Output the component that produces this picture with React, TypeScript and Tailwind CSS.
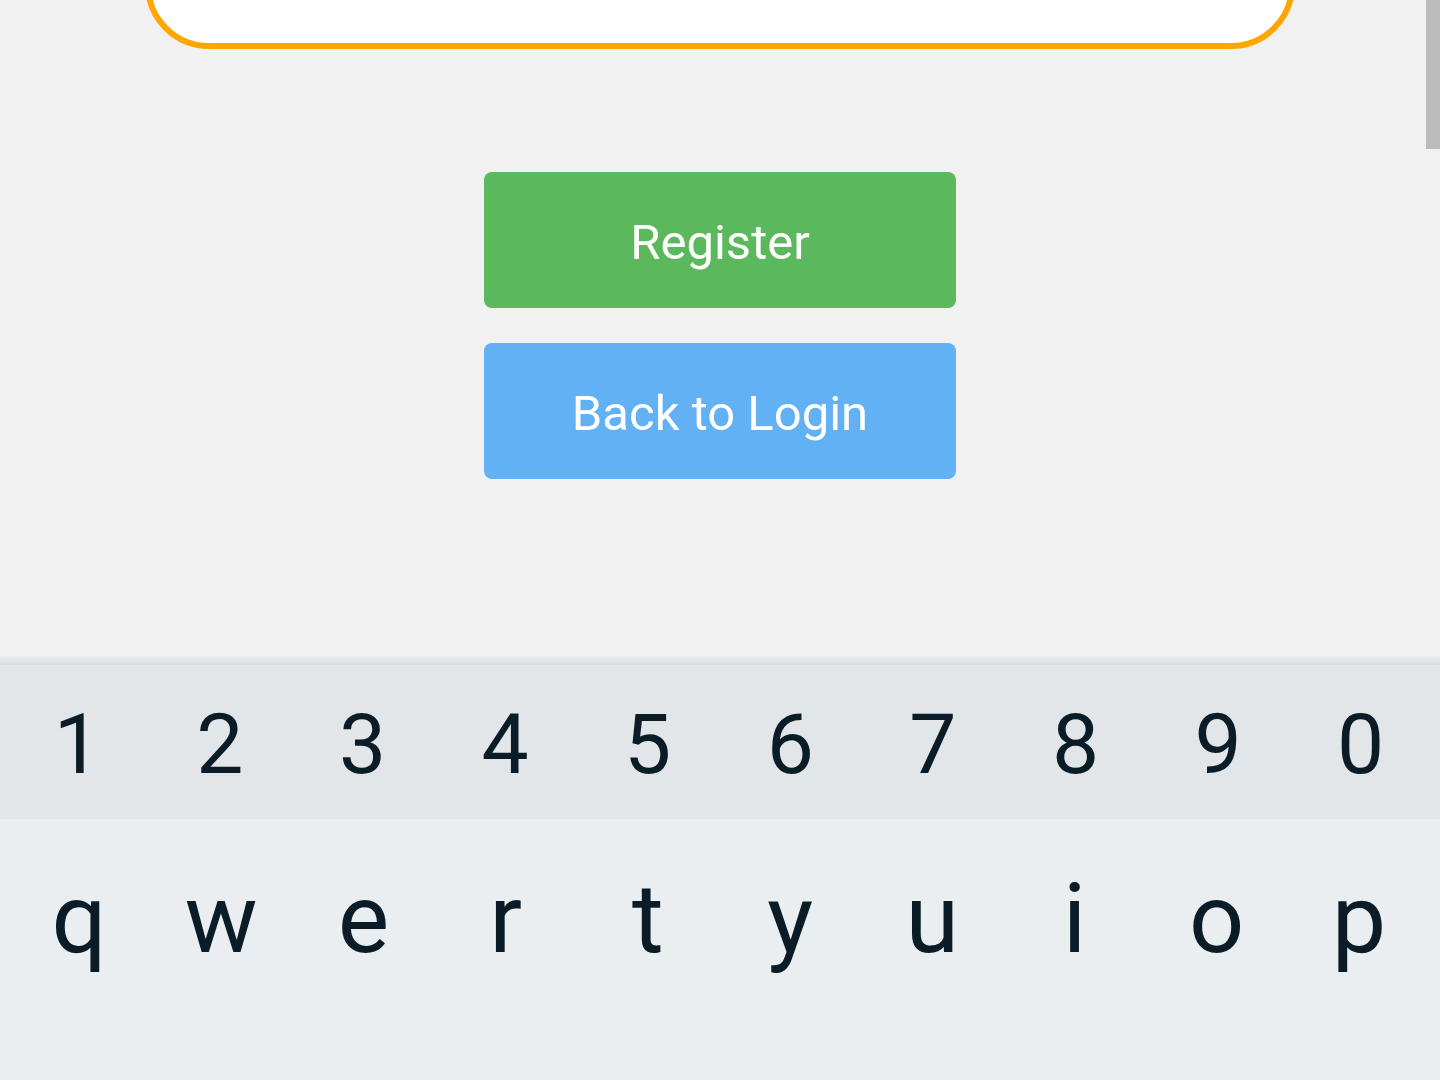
import React from "react";

const digits = ["1", "2", "3", "4", "5", "6", "7", "8", "9", "0"];
const letters = ["q", "w", "e", "r", "t", "y", "u", "i", "o", "p"];

export default function App() {
  return (
    <div
      className="relative flex h-[1080px] w-[1440px] flex-col overflow-hidden bg-[#f1f1f1]"
      style={{ fontFamily: "Roboto, 'Noto Sans', sans-serif" }}
    >
      <div className="absolute right-0 top-0 h-[149px] w-[14px] bg-[#bbbbbb]" />

      <div className="mx-auto mt-[-200px] h-[249px] w-[1150px] shrink-0 rounded-[64px] border-[6px] border-[#ffa500] bg-white" />

      <div className="mx-auto mt-[123px] flex w-[472px] flex-col gap-[35px]">
        <button className="flex h-[136px] w-full items-center justify-center rounded-[8px] bg-[#5cb85c] pt-[4px] text-[49px] leading-none text-white">
          Register
        </button>
        <button className="flex h-[136px] w-full items-center justify-center rounded-[8px] bg-[#63b1f5] pt-[4px] text-[49px] leading-none text-white">
          Back to Login
        </button>
      </div>

      <div className="mt-auto">
        <div className="h-[10px] bg-gradient-to-b from-[#f1f1f1] to-[#dcdcdc]" />
        <div className="grid h-[154px] grid-cols-10 bg-[#e2e6e9] pl-[6px] pr-[8px] pt-[6px] text-[#0a1c27]">
          {digits.map((d) => (
            <div key={d} className="flex items-center justify-center text-[84px] leading-none">
              {d}
            </div>
          ))}
        </div>
        <div className="h-[261px] bg-[#eaeef1] text-[#0a1c27]">
          <div className="grid h-[200px] grid-cols-10 pl-[8px] pr-[10px]">
            {letters.map((l) => (
              <div key={l} className="flex items-center justify-center text-[97px] leading-none">
                {l}
              </div>
            ))}
          </div>
        </div>
      </div>
    </div>
  );
}
